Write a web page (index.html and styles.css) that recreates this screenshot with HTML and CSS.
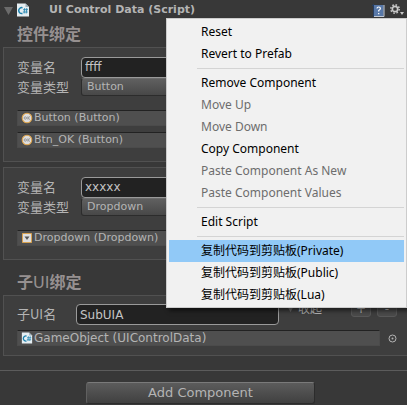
FILE: index.html
```html
<!DOCTYPE html>
<html lang="zh-CN">
<head>
<meta charset="utf-8">
<title>UI Control Data</title>
<link rel="stylesheet" href="styles.css">
</head>
<body>
<svg width="0" height="0" class="defs" aria-hidden="true">
  <symbol id="script" viewBox="0 0 14 14">
    <path d="M1 0.5h8.5L13 4v9.5H1z" fill="#e6eef2"/>
    <path d="M9.500 .5L13 4H9.500z" fill="#9fb2bc"/>
    <path d="M6.500 4.700A3 3 0 1 0 6.500 10.500" fill="none" stroke="#1b81ad" stroke-width="1.500"/>
    <path d="M8.700 5l-.6 5.500M10.800 5l-.6 5.500M7 6.700h5M6.800 9h5" fill="none" stroke="#1b81ad" stroke-width=".8"/>
  </symbol>
  <symbol id="ok" viewBox="0 0 12 12">
    <circle cx="6" cy="6" r="4.800" fill="#dedede" stroke="#e0a64e" stroke-width="1.100"/>
    <circle cx="4.300" cy="6" r="1.200" fill="none" stroke="#888" stroke-width=".8"/>
    <path d="M6.900 4.400v3.200M9 4.400L7.200 6 9 7.600" fill="none" stroke="#888" stroke-width=".8"/>
  </symbol>
</svg>
<main class="inspector">
  <header class="header">
    <svg class="fold" viewBox="0 0 9 9"><path d="M0 1h9L4.500 9z" fill="#6b6b6b"/></svg>
    <svg class="script-icon"><use href="#script"/></svg>
    <h1>UI Control Data (Script)</h1>
    <button class="tool" aria-label="Help">
      <svg width="13" height="13" viewBox="0 0 13 13"><path d="M1 1h10.500v11H1z" fill="#5878a8"/><path d="M1.500 0v13M0 1.500h2" stroke="#263d60"/><path d="M12 1v11.500H2" fill="none" stroke="#c4cbd5"/><path d="M5 4.500q0-1.500 1.700-1.500t1.700 1.500q0 1-1.700 2v1M6.700 9v1.300" fill="none" stroke="#fff" stroke-width="1.200"/></svg>
    </button>
    <button class="tool" aria-label="Component menu">
      <svg width="14" height="12" viewBox="0 0 14 12"><circle cx="5" cy="5" r="2.700" fill="none" stroke="#c8c8c8" stroke-width="1.700"/><circle cx="5" cy="5" r="4.200" fill="none" stroke="#c8c8c8" stroke-width="1.500" stroke-dasharray="1.600 1.700"/><path d="M10 8h4l-2 3z" fill="#c8c8c8"/></svg>
    </button>
  </header>

  <h2>控件绑定</h2>
  <section class="box">
    <div class="row"><label for="n1">变量名</label><input id="n1" type="text" value="ffff"></div>
    <div class="row type"><label for="t1">变量类型</label><select id="t1"><option>Button</option></select></div>
    <div class="refs">
      <div class="ref"><div class="object"><svg><use href="#ok"/></svg>Button (Button)</div></div>
      <div class="ref"><div class="object"><svg><use href="#ok"/></svg>Btn_OK (Button)</div></div>
    </div>
  </section>
  <section class="box">
    <div class="row"><label for="n2">变量名</label><input id="n2" type="text" value="xxxxx"></div>
    <div class="row type"><label for="t2">变量类型</label><select id="t2"><option>Dropdown</option></select></div>
    <div class="refs">
      <div class="ref"><div class="object"><svg viewBox="0 0 12 12"><path d="M1.500 1.500h9v9h-9z" fill="#dedede" stroke="#d8a250"/><path d="M3.500 4.500h5L6 8z" fill="#555"/></svg>Dropdown (Dropdown)</div></div>
    </div>
  </section>

  <h2 class="sub-title">子<span class="latin">UI</span>绑定</h2>
  <section class="box sub">
    <div class="row">
      <label for="n3">子UI名</label><input id="n3" type="text" value="SubUIA">
      <div class="collapse"><svg width="7" height="7" viewBox="0 0 7 7"><path d="M0 1h7L3.500 7z" fill="#6b6b6b"/></svg>收起</div>
      <button class="small">+</button><button class="small">-</button>
    </div>
    <div class="ref">
      <div class="object"><svg><use href="#script"/></svg>GameObject (UIControlData)</div>
      <button class="picker" aria-label="Select object"><svg width="9" height="9" viewBox="0 0 9 9"><circle cx="4.500" cy="4.500" r="3.500" fill="none" stroke="#b4b4b4"/><circle cx="4.500" cy="4.500" r="1" fill="#b4b4b4"/></svg></button>
    </div>
  </section>
  <footer><button class="add">Add Component</button></footer>
</main>

<div class="menu" role="menu">
  <button role="menuitem">Reset</button>
  <button role="menuitem">Revert to Prefab</button>
  <hr>
  <button role="menuitem">Remove Component</button>
  <button role="menuitem" disabled>Move Up</button>
  <button role="menuitem" disabled>Move Down</button>
  <button role="menuitem">Copy Component</button>
  <button role="menuitem" disabled>Paste Component As New</button>
  <button role="menuitem" disabled>Paste Component Values</button>
  <hr>
  <button role="menuitem">Edit Script</button>
  <hr>
  <button role="menuitem" class="active">复制代码到剪贴板(Private)</button>
  <button role="menuitem">复制代码到剪贴板(Public)</button>
  <button role="menuitem">复制代码到剪贴板(Lua)</button>
</div>
</body>
</html>
```
FILE: styles.css
```css
* { box-sizing: border-box; }
body {
  margin: 0;
  background: #383838;
  color: #b4b4b4;
  font: 12px/16px "DejaVu Sans", "Noto Sans CJK SC", sans-serif;
  overflow: hidden;
}
button, input, select { font: inherit; color: inherit; margin: 0; }
svg { display: block; flex: none; }
.defs { position: absolute; }

.header { display: flex; align-items: center; height: 20px; padding: 0 3px 0 4px; }
.fold { width: 9px; height: 9px; }
.script-icon { width: 14px; height: 14px; margin: 0 19px 0 3px; }
h1 { flex: 1; margin: 0; font-size: 11px; line-height: 16px; white-space: nowrap; }
.tool { padding: 0; border: 0; background: none; }
.tool + .tool { margin-left: 5px; }

h2 {
  margin: 0;
  padding: 1px 17px 0;
  height: 27px;
  font: bold 16px/24px "Noto Sans CJK SC", sans-serif;
  color: #969090;
}
.sub-title { padding-top: 4px; height: 30px; }
.latin { font-family: "DejaVu Sans", sans-serif; font-weight: normal; }

.box {
  margin: 0 0 5px 3px;
  padding: 8px 4px 13px 13px;
  border: 1px solid #515151;
  border-right: 0;
  background: #3e3e3e;
}
.row { display: flex; align-items: center; height: 22px; }
.row label {
  flex: none;
  width: 64px;
  font: 13px/20px "Noto Sans CJK SC", sans-serif;
}
input {
  width: 200px;
  height: 21px;
  padding: 0 3px;
  border: 1px solid #9a9a9a;
  border-radius: 4px;
  background: #222;
  color: #c4c4c4;
}
select {
  appearance: none;
  width: 200px;
  height: 18px;
  padding: 0 5px;
  border: 1px solid #2c2c2c;
  border-top-color: #6c6c6c;
  border-radius: 3px;
  background: linear-gradient(#606060, #484848);
  font-size: 11px;
}
.type { height: 18px; }
.refs { display: grid; gap: 6px; padding-top: 14px; }
.ref { display: flex; align-items: center; }
.object {
  flex: 1;
  display: flex;
  align-items: center;
  gap: 1px;
  height: 16px;
  margin-right: 22px;
  padding-left: 3px;
  border: 1px solid #4b4b4b;
  border-top-color: #222;
  background: #4f4f4f;
  font-size: 11px;
  white-space: nowrap;
}
.object svg { width: 12px; height: 12px; }

.sub { padding-top: 4px; padding-bottom: 9px; }
.sub label { width: 59px; margin-top: 4px; }
.sub input { flex: 0 1 203px; min-width: 0; margin-top: 4px; }
.sub .row { height: 30px; align-items: flex-start; }
.sub .object { margin-right: 8px; font-size: 12px; }
.collapse {
  flex: 1;
  display: flex;
  align-items: center;
  gap: 4px;
  margin-left: 8px;
  font-family: "Noto Sans CJK SC", sans-serif;
  white-space: nowrap;
}
.small {
  width: 20px;
  height: 17px;
  margin-right: 6px;
  padding: 0;
  border: 1px solid #585858;
  border-radius: 3px;
  background: #4a4a4a;
  line-height: 12px;
}
.picker { padding: 0; margin-right: 6px; border: 0; background: none; }

footer {
  display: flex;
  justify-content: center;
  margin-top: 14px;
  padding: 11px 6px 0 0;
  border-top: 1px solid #5c5c5c;
}
.add {
  width: 57%;
  height: 22px;
  padding: 0;
  border: 1px solid #2c2c2c;
  border-top-color: #7a7a7a;
  border-left-color: #606060;
  border-radius: 3px;
  background: linear-gradient(#5c5c5c, #404040);
  font-size: 13px;
  line-height: 18px;
}

.menu {
  position: absolute;
  top: 18px;
  left: 166px;
  right: 0;
  padding: 2px 2px 1px;
  border: 1px solid #ccc;
  background: #f1f1f1;
  box-shadow: 3px 3px 4px rgba(0, 0, 0, .5);
}
.menu button {
  display: block;
  width: 100%;
  height: 22px;
  padding: 0 0 0 32px;
  border: 0;
  background: none;
  color: #000;
  font: 12px/20px "Noto Sans", "Noto Sans CJK SC", sans-serif;
  text-align: left;
  white-space: nowrap;
}
.menu button:disabled { color: #6d6d6d; }
.menu .active { background: #91c9f7; }
.menu hr { height: 1px; margin: 3px 0 3px 28px; border: 0; background: #d4d4d4; }
```
